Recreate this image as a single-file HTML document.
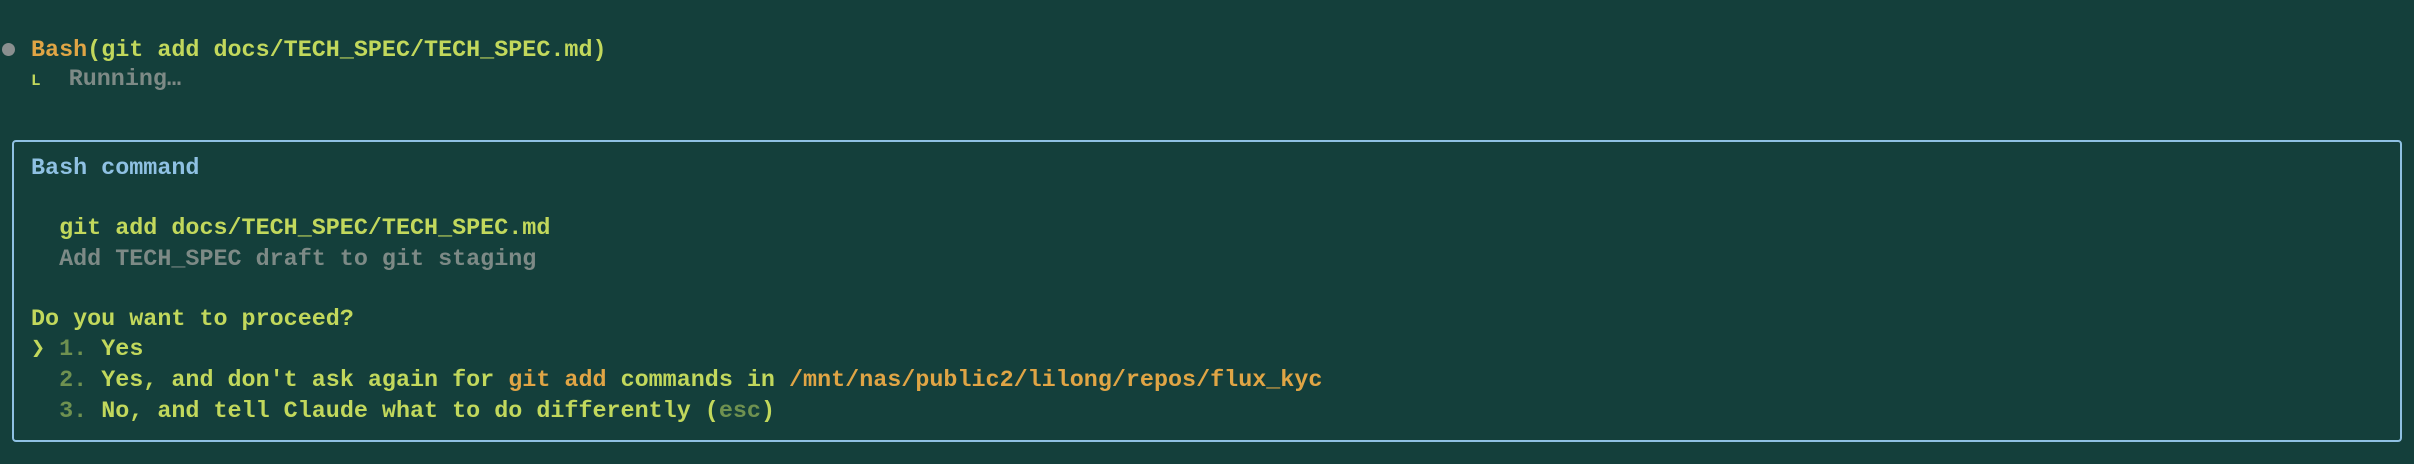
<!DOCTYPE html>
<html><head><meta charset="utf-8"><style>
html,body{margin:0;padding:0;width:2414px;height:464px;overflow:hidden;background:#143f3b;}
body{font-family:"Liberation Mono","DejaVu Sans Mono",monospace;font-size:23.4px;font-weight:bold;color:#c2d85c;position:relative;}
.l{position:absolute;white-space:pre;line-height:30px;}
.o{color:#e0a545;}
.g{color:#7d8a86;}
.b{color:#8fc1e3;font-weight:bold;}
.n{color:#6f9150;}
.box{position:absolute;left:12px;top:140px;width:2390px;height:302px;border:2px solid #8fc1e3;border-radius:4px;box-sizing:border-box;}
.dot{position:absolute;left:2px;top:43px;width:13px;height:13px;border-radius:50%;background:#8a8f8f;}
</style></head><body>
<div class="dot"></div>
<div class="l" style="left:31px;top:36px;"><span class="o">Bash</span>(git add docs/TECH_SPEC/TECH_SPEC.md)</div>
<div class="l" style="left:31px;top:65px;"><span style="font-size:16px">L</span>  <span class="g">Running…</span></div>
<div class="box"></div>
<div class="l b" style="left:31px;top:154px;">Bash command</div>
<div class="l" style="left:31px;top:214px;">  git add docs/TECH_SPEC/TECH_SPEC.md</div>
<div class="l g" style="left:31px;top:245px;">  Add TECH_SPEC draft to git staging</div>
<div class="l" style="left:31px;top:305px;">Do you want to proceed?</div>
<div class="l" style="left:31px;top:335px;">❯ <span class="n">1.</span> Yes</div>
<div class="l" style="left:31px;top:366px;">  <span class="n">2.</span> Yes, and don't ask again for <span class="o">git add</span> commands in <span class="o">/mnt/nas/public2/lilong/repos/flux_kyc</span></div>
<div class="l" style="left:31px;top:397px;">  <span class="n">3.</span> No, and tell Claude what to do differently (<span class="n">esc</span>)</div>
</body></html>
